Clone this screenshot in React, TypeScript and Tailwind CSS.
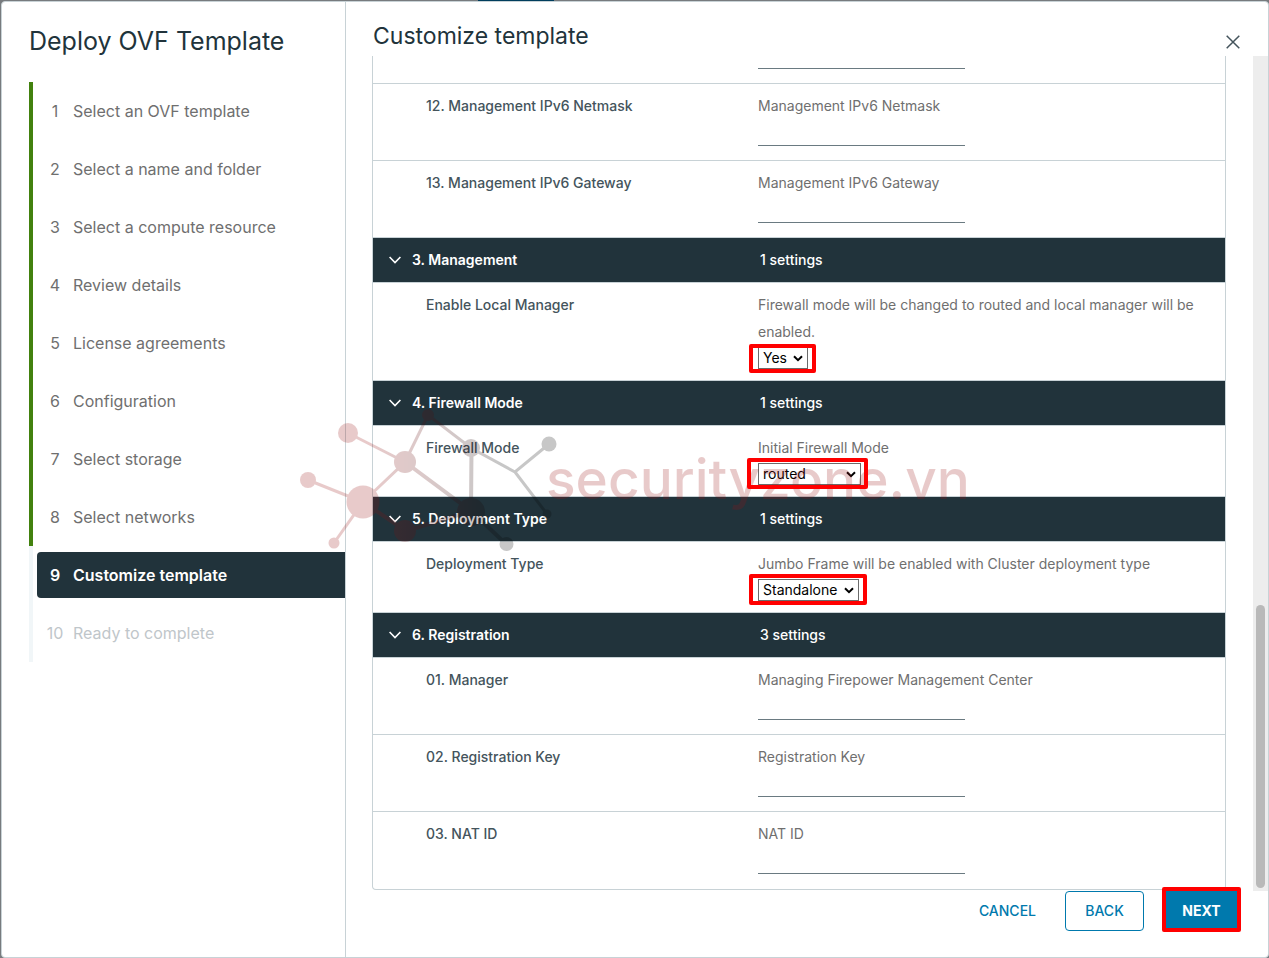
import React, { useState } from "react";

const steps = [
  "Select an OVF template",
  "Select a name and folder",
  "Select a compute resource",
  "Review details",
  "License agreements",
  "Configuration",
  "Select storage",
  "Select networks",
  "Customize template",
  "Ready to complete",
];

const currentStep = 8;

function StepNav() {
  return (
    <nav aria-label="Wizard steps" className="mt-[26px] pl-[27px]">
      <ol>
        {steps.map((step, i) => {
          const bar = i < currentStep ? "border-[#42810e]" : "border-[#f1f6f8]";
          const look =
            i === currentStep
              ? "bg-[#21333b] text-white font-semibold rounded-l"
              : i < currentStep
                ? "text-[#6f6f6f]"
                : "text-[#bfc6ca]";
          return (
            <li key={step} className={`flex h-[58px] items-center border-l-4 pl-1 ${bar}`}>
              <button
                type="button"
                disabled={i > currentStep}
                aria-current={i === currentStep ? "step" : undefined}
                className={`flex h-[46px] w-full items-center text-left text-base ${look}`}
              >
                <span className="w-9 text-center">{i + 1}</span>
                <span>{step}</span>
              </button>
            </li>
          );
        })}
      </ol>
    </nav>
  );
}

function Highlight({ className }: { className: string }) {
  return (
    <span
      aria-hidden="true"
      className={`pointer-events-none absolute z-20 rounded-xs border-4 border-[#ff0000] ${className}`}
    />
  );
}

function SectionHeader({ title, count }: { title: string; count: number }) {
  return (
    <button
      type="button"
      aria-expanded="true"
      className="grid h-[45px] w-full grid-cols-[387px_1fr] items-center border-b border-[#c8d2d6] bg-[#21333b] text-left text-sm font-medium text-white"
    >
      <span className="flex items-center gap-[11px] pl-4 font-semibold">
        <svg width="12" height="8" viewBox="0 0 12 8" fill="none" stroke="currentColor" strokeWidth="1.6">
          <path d="M0.6 1 L6 6.5 L11.4 1" />
        </svg>
        {title}
      </span>
      <span>{count} settings</span>
    </button>
  );
}

function TextRow({ id, label, hint, last }: { id: string; label: string; hint: string; last?: boolean }) {
  return (
    <div className={`grid h-[77px] grid-cols-[385px_1fr] pt-2 ${last ? "" : "border-b border-[#c8d2d6]"}`}>
      <label htmlFor={id} className="pl-[53px] text-sm leading-[27px] font-medium text-[#44545c]">
        {label}
      </label>
      <div className="text-sm leading-[27px] text-[#6f6f6f]">
        <p>{hint}</p>
        <input
          id={id}
          type="text"
          className="block h-[27px] w-[207px] border-b border-[#6a7a81] bg-transparent px-1 outline-none"
        />
      </div>
    </div>
  );
}

interface SelectRowProps {
  id: string;
  label: string;
  hint: string;
  options: string[];
  width: string;
  highlight: string;
}

function SelectRow({ id, label, hint, options, width, highlight }: SelectRowProps) {
  const [value, setValue] = useState(options[0]);
  return (
    <div className="grid grid-cols-[385px_1fr] border-b border-[#c8d2d6] pt-2 pb-[11px]">
      <label htmlFor={id} className="pl-[53px] text-sm leading-[27px] font-medium text-[#44545c]">
        {label}
      </label>
      <div className="text-sm leading-[27px] text-[#6f6f6f]">
        <p>{hint}</p>
        <div className={`relative mt-0.5 h-[22px] ${width}`}>
          <select
            id={id}
            value={value}
            onChange={(e) => setValue(e.target.value)}
            className="block h-[22px] w-full appearance-none border border-[#6b6b6b] bg-white pl-1 text-sm leading-5 text-black"
          >
            {options.map((o) => (
              <option key={o}>{o}</option>
            ))}
          </select>
          <svg
            className="pointer-events-none absolute top-2 right-[5px]"
            width="10"
            height="7"
            viewBox="0 0 10 7"
            fill="none"
            stroke="#000"
            strokeWidth="2"
          >
            <path d="M1 1.2 L5 5.2 L9 1.2" />
          </svg>
          <Highlight className={highlight} />
        </div>
      </div>
    </div>
  );
}

function Watermark() {
  return (
    <svg
      aria-hidden="true"
      className="pointer-events-none absolute top-[398px] left-[288px] z-10"
      width="700"
      height="160"
      viewBox="290 400 700 160"
    >
      <defs>
        <linearGradient id="fade" gradientUnits="userSpaceOnUse" x1="370" y1="0" x2="500" y2="0">
          <stop offset="0" stopColor="#9b1313" />
          <stop offset="1" stopColor="#050505" />
        </linearGradient>
      </defs>
      <g opacity="0.22">
        <g stroke="url(#fade)" strokeWidth="3" fill="none">
          <path d="M348 433L405 462M308 480L363 502L334 543M363 502L405 462L428 415L471 448L515 472L549 444M515 472L547 514" />
          <path strokeWidth="4" d="M405 462L471 511M471.5 448L471 511M363 502L406 531L471 511L506 544" />
        </g>
        <g fill="url(#fade)">
          <circle cx="348" cy="433" r="10" />
          <circle cx="308" cy="480" r="8" />
          <circle cx="363" cy="502" r="16.5" />
          <circle cx="334" cy="543" r="5.5" />
          <circle cx="405" cy="462" r="11" />
          <circle cx="428" cy="415" r="6" />
          <circle cx="471" cy="448" r="9" />
          <circle cx="471" cy="512" r="14" />
          <circle cx="405" cy="531" r="11" />
          <circle cx="506.5" cy="544" r="7" />
          <circle cx="549" cy="444" r="7.5" />
          <circle cx="547" cy="514" r="4.5" />
        </g>
        <text x="546" y="499" fill="#9b1313" fontSize="55" fontWeight="500">
          securityzone.vn
        </text>
      </g>
    </svg>
  );
}

export default function App() {
  return (
    <div className="relative h-screen bg-[#777b7e] pt-px pl-px font-['Inter','Open_Sans',sans-serif]">
      <div aria-hidden="true" className="absolute top-0 left-[478px] h-px w-[76px] bg-[#003d5c]" />
      <div
        role="dialog"
        aria-labelledby="wizard-title"
        className="relative flex h-full overflow-hidden rounded border border-[#c8d2d6] bg-white"
      >
        <aside className="w-[344px] shrink-0 border-r border-[#c8d2d6]">
          <h1 id="wizard-title" className="pt-6 pl-[27px] text-[25px] leading-[30px] text-[#21333b]">
            Deploy OVF Template
          </h1>
          <StepNav />
        </aside>

        <main className="flex min-w-0 flex-1 flex-col">
          <header className="flex h-[54px] shrink-0 items-start justify-between pt-5 pr-7 pl-[27px]">
            <h2 className="text-[23px] leading-7 text-[#21333b]">Customize template</h2>
            <button type="button" aria-label="Close" className="mt-[13px] text-[#44545c]">
              <svg width="14" height="14" viewBox="0 0 14 14" stroke="currentColor" strokeWidth="1.5">
                <path d="M0.7 0.7L13.3 13.3M13.3 0.7L0.7 13.3" />
              </svg>
            </button>
          </header>

          <div className="flex min-h-0 flex-1 justify-between pl-[26px]">
            <form className="mr-[27px] min-w-0 flex-1 self-start rounded-b border-x border-b border-[#c8d2d6]">
              <div className="grid h-7 grid-cols-[385px_1fr] border-b border-[#c8d2d6]">
                <input
                  aria-label="11. Management IPv6 Address"
                  type="text"
                  className="col-start-2 h-[13px] w-[207px] border-b border-[#6a7a81] bg-transparent outline-none"
                />
              </div>
              <TextRow id="netmask6" label="12. Management IPv6 Netmask" hint="Management IPv6 Netmask" />
              <TextRow id="gateway6" label="13. Management IPv6 Gateway" hint="Management IPv6 Gateway" />
              <SectionHeader title="3. Management" count={1} />
              <SelectRow
                id="local-manager"
                label="Enable Local Manager"
                hint="Firewall mode will be changed to routed and local manager will be enabled."
                options={["Yes", "No"]}
                width="w-[50px]"
                highlight="-top-[3px] -right-2 -bottom-1 -left-[9px]"
              />
              <SectionHeader title="4. Firewall Mode" count={1} />
              <SelectRow
                id="firewall-mode"
                label="Firewall Mode"
                hint="Initial Firewall Mode"
                options={["routed", "transparent"]}
                width="w-[103px]"
                highlight="-top-[5px] -right-[7px] -bottom-1 -left-[11px]"
              />
              <SectionHeader title="5. Deployment Type" count={1} />
              <SelectRow
                id="deployment-type"
                label="Deployment Type"
                hint="Jumbo Frame will be enabled with Cluster deployment type"
                options={["Standalone", "Cluster"]}
                width="w-[101px]"
                highlight="-top-[5px] -right-2 -bottom-1 -left-[9px]"
              />
              <SectionHeader title="6. Registration" count={3} />
              <TextRow id="manager" label="01. Manager" hint="Managing Firepower Management Center" />
              <TextRow id="reg-key" label="02. Registration Key" hint="Registration Key" />
              <TextRow id="nat-id" label="03. NAT ID" hint="NAT ID" last />
            </form>
            <div aria-hidden="true" className="flex w-[15px] flex-col justify-end bg-[#ededed] px-[3px] pb-[3px]">
              <div className="h-[34%] rounded-full bg-[#b9b9b9]" />
            </div>
          </div>

          <footer className="flex h-[66px] shrink-0 items-start justify-end gap-[19px] pr-7 text-sm">
            <button type="button" className="mr-[10px] h-10 font-medium text-[#0079ad]">
              CANCEL
            </button>
            <button type="button" className="h-10 w-[79px] rounded border border-[#0079ad] font-medium text-[#0079ad]">
              BACK
            </button>
            <button type="button" className="relative h-10 w-[77px] bg-[#0079ad] font-bold text-white">
              NEXT
              <Highlight className="-top-1 -right-px -bottom-px -left-px" />
            </button>
          </footer>
        </main>

        <Watermark />
      </div>
    </div>
  );
}
